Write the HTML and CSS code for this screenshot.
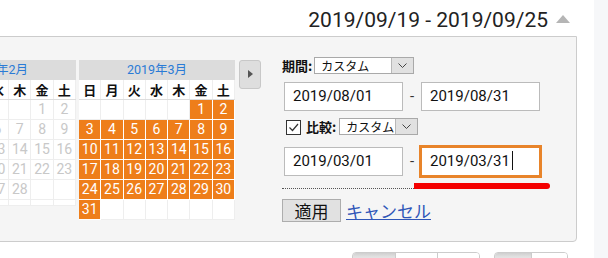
FILE: index.html
```html
<!DOCTYPE html>
<html lang="ja">
<head>
  <meta charset="UTF-8" />
  <title>期間の選択</title>
  <link rel="stylesheet" href="styles.css">
</head>
<body>
  <div class="page">
    <div class="main">
      <div class="range-bar">
        <span class="range-text">2019/09/19 - 2019/09/25</span>
        <span class="range-toggle"></span>
      </div>

      <div class="panel">
        <div class="calendars">
          <div class="month">
            <div class="month-title">2019年2月</div>
            <div class="weekdays"><span>日</span><span>月</span><span>火</span><span>水</span><span>木</span><span>金</span><span>土</span></div>
            <div class="days">
              <span></span><span></span><span></span><span></span><span></span><span>1</span><span>2</span>
              <span>3</span><span>4</span><span>5</span><span>6</span><span>7</span><span>8</span><span>9</span>
              <span>10</span><span>11</span><span>12</span><span>13</span><span>14</span><span>15</span><span>16</span>
              <span>17</span><span>18</span><span>19</span><span>20</span><span>21</span><span>22</span><span>23</span>
              <span>24</span><span>25</span><span>26</span><span>27</span><span>28</span><span></span><span></span>
              <span class="tail"></span><span class="tail"></span><span class="tail"></span><span class="tail"></span><span class="tail"></span><span class="tail"></span><span class="tail"></span>
            </div>
          </div>

          <div class="month">
            <div class="month-title">2019年3月</div>
            <div class="weekdays"><span>日</span><span>月</span><span>火</span><span>水</span><span>木</span><span>金</span><span>土</span></div>
            <div class="days">
              <span></span><span></span><span></span><span></span><span></span><span class="on">1</span><span class="on">2</span>
              <span class="on">3</span><span class="on">4</span><span class="on">5</span><span class="on">6</span><span class="on">7</span><span class="on">8</span><span class="on">9</span>
              <span class="on">10</span><span class="on">11</span><span class="on">12</span><span class="on">13</span><span class="on">14</span><span class="on">15</span><span class="on">16</span>
              <span class="on">17</span><span class="on">18</span><span class="on">19</span><span class="on">20</span><span class="on">21</span><span class="on">22</span><span class="on">23</span>
              <span class="on">24</span><span class="on">25</span><span class="on">26</span><span class="on">27</span><span class="on">28</span><span class="on">29</span><span class="on">30</span>
              <span class="on">31</span><span></span><span></span><span></span><span></span><span></span><span></span>
            </div>
          </div>

          <div class="next-btn" title="次の月"><span class="next-arrow"></span></div>
        </div>

        <div class="form">
          <div class="row">
            <span class="label">期間:</span>
            <div class="select select-wide">
              <span class="select-text">カスタム</span>
              <span class="select-drop">
                <svg width="9" height="6" viewBox="0 0 9 6"><polyline points="0.5,0.5 4.5,4.5 8.5,0.5" fill="none" stroke="#444" stroke-width="1"/></svg>
              </span>
            </div>
          </div>

          <div class="row dates">
            <div class="field">2019/08/01</div>
            <span class="dash">-</span>
            <div class="field">2019/08/31</div>
          </div>

          <div class="row compare">
            <span class="checkbox">
              <svg width="13" height="13" viewBox="0 0 13 13"><polyline points="2.5,6.5 5.5,9.5 11,3" fill="none" stroke="#333" stroke-width="1.2"/></svg>
            </span>
            <span class="label">比較:</span>
            <div class="select select-narrow">
              <span class="select-text">カスタム</span>
              <span class="select-drop">
                <svg width="9" height="6" viewBox="0 0 9 6"><polyline points="0.5,0.5 4.5,4.5 8.5,0.5" fill="none" stroke="#444" stroke-width="1"/></svg>
              </span>
            </div>
          </div>

          <div class="row dates dates-compare">
            <div class="field">2019/03/01</div>
            <span class="dash">-</span>
            <div class="field active">2019/03/31<span class="caret"></span></div>
          </div>

          <div class="rule">
            <span class="dots"></span>
            <span class="mark"></span>
          </div>

          <div class="row actions">
            <button class="apply">適用</button>
            <a href="#" class="cancel">キャンセル</a>
          </div>
        </div>
      </div>

      <div class="toolbar">
        <div class="btn-group">
          <span class="seg pressed"></span><span class="seg"></span><span class="seg"></span>
        </div>
        <div class="btn-group">
          <span class="seg pressed"></span><span class="seg"></span>
        </div>
      </div>
    </div>
    <div class="strip"></div>
  </div>
</body>
</html>
```

FILE: styles.css
```css
* {
  margin: 0;
  padding: 0;
  box-sizing: border-box;
}
body {
  font-family: Roboto, "Noto Sans CJK JP", sans-serif;
  color: #222;
  background: #fff;
  overflow: hidden;
}
.page {
  display: flex;
  height: 258px;
  overflow: hidden;
}
.main {
  width: 594px;
  flex-shrink: 0;
}
.strip {
  flex: 1;
  background: #f6f7f9;
}

/* top range */
.range-bar {
  height: 36px;
  display: flex;
  justify-content: flex-end;
  align-items: center;
  gap: 8px;
  padding-right: 24px;
  padding-top: 3px;
}
.range-text {
  font-size: 21px;
  color: #222;
}
.range-toggle {
  width: 0;
  height: 0;
  border-left: 7px solid transparent;
  border-right: 7px solid transparent;
  border-bottom: 8px solid #b5b5b5;
  margin-top: -2px;
}

/* panel */
.panel {
  margin: 0 17px 0 -90px;
  background: #f5f5f5;
  border: 1px solid #ccc;
  border-radius: 0 0 4px 0;
  padding: 20px 0 19px 9px;
  display: flex;
}
.calendars {
  display: flex;
  align-items: flex-start;
  gap: 3px;
  margin-top: 3px;
}
.month {
  width: 156px;
}
.month-title {
  height: 20px;
  line-height: 20px;
  background: #dcdcdc;
  color: #2a7bd6;
  font-size: 12.5px;
  text-align: center;
}
.weekdays,
.days {
  display: grid;
  grid-template-columns: repeat(7, 1fr);
  background: #fff;
}
.weekdays {
  border-bottom: 1px solid #ddd;
}
.weekdays span {
  height: 19px;
  line-height: 19px;
  text-align: center;
  font-family: "Noto Sans CJK JP", sans-serif;
  font-weight: bold;
  font-size: 13px;
  color: #111;
  border-right: 1px solid #eee;
}
.days span {
  height: 20px;
  line-height: 19px;
  text-align: center;
  font-size: 14px;
  color: #c8c8c8;
  border-right: 1px solid #eee;
  border-bottom: 1px solid #eee;
}
.days span.on {
  background: #ee7e1a;
  color: #fff;
  border-color: #fff;
}
.days span.tail {
  height: 6px;
}
.next-btn {
  margin-left: 1px;
  width: 22px;
  height: 29px;
  background: #dedede;
  border: 1px solid #c8c8c8;
  border-radius: 3px;
  display: flex;
  align-items: center;
  justify-content: center;
}
.next-arrow {
  width: 0;
  height: 0;
  border-top: 4px solid transparent;
  border-bottom: 4px solid transparent;
  border-left: 5px solid #555;
  margin-top: -2px;
}

/* form */
.form {
  margin-left: 21px;
  display: flex;
  flex-direction: column;
  font-family: "Noto Sans CJK JP", sans-serif;
}
.row {
  display: flex;
  align-items: center;
  line-height: 17px;
}
.label {
  font-weight: bold;
  font-size: 13px;
  line-height: 17px;
  color: #111;
  margin-right: 2px;
}
.select {
  display: flex;
  height: 17px;
  border: 1px solid #a9a9a9;
  background: #fff;
  font-size: 12px;
  color: #111;
}
.select-wide {
  width: 100px;
}
.select-narrow {
  width: 79px;
}
.select-text {
  flex: 1;
  padding-left: 6px;
  line-height: 15px;
}
.select-drop {
  width: 22px;
  background: #e1e1e1;
  border-left: 1px solid #b8b8b8;
  display: flex;
  align-items: center;
  justify-content: center;
}
.dates {
  margin-top: 8px;
  padding-left: 2px;
}
.dates-compare {
  margin-top: 12px;
}
.field {
  width: 119px;
  height: 29px;
  line-height: 27px;
  border: 1px solid #bbb;
  background: #fff;
  padding-left: 8px;
  font-family: Roboto, sans-serif;
  font-size: 15px;
  color: #111;
}
.field.active {
  border-color: #e8842a;
  outline: 2px solid #e8842a;
}
.caret {
  display: inline-block;
  width: 1px;
  height: 19px;
  background: #111;
  margin-left: 2px;
  vertical-align: -4px;
}
.dash {
  width: 18px;
  text-align: center;
  font-family: Roboto, sans-serif;
  font-size: 15px;
  color: #333;
}
.compare {
  margin-top: 7px;
}
.checkbox {
  width: 15px;
  height: 15px;
  margin: 2px 5px 0 4px;
  border: 1px solid #333;
  background: #fff;
  display: flex;
}
.compare .label {
  margin-right: 3px;
}
.rule {
  margin-top: 7px;
  height: 6px;
  display: flex;
  align-items: flex-end;
}
.dots {
  width: 132px;
  border-bottom: 1px dotted #555;
}
.mark {
  width: 136px;
  height: 6px;
  background: #f40000;
  border-radius: 0 3px 3px 0;
}
.actions {
  margin-top: 10px;
  height: 23px;
}
.apply {
  width: 59px;
  height: 23px;
  background: #e1e1e1;
  border: 1px solid #adadad;
  font-family: "Noto Sans CJK JP", sans-serif;
  font-size: 17px;
  line-height: 20px;
  color: #111;
}
.cancel {
  margin-left: 5px;
  font-size: 17px;
  line-height: 23px;
  color: #2f56b8;
  text-decoration: underline;
}

/* bottom buttons */
.toolbar {
  margin-top: 10px;
  display: flex;
  justify-content: flex-end;
  gap: 14px;
  padding-right: 26px;
}
.btn-group {
  display: flex;
  border: 1px solid #ccc;
  border-radius: 4px 4px 0 0;
  overflow: hidden;
}
.seg {
  width: 42px;
  height: 26px;
  background: #fff;
  border-left: 1px solid #ccc;
}
.btn-group .seg:first-child {
  border-left: none;
}
.btn-group:last-child .seg {
  width: 36px;
}
.seg.pressed {
  background: linear-gradient(#cfcfcf, #e2e2e2 4px, #e6e6e6);
}
```
